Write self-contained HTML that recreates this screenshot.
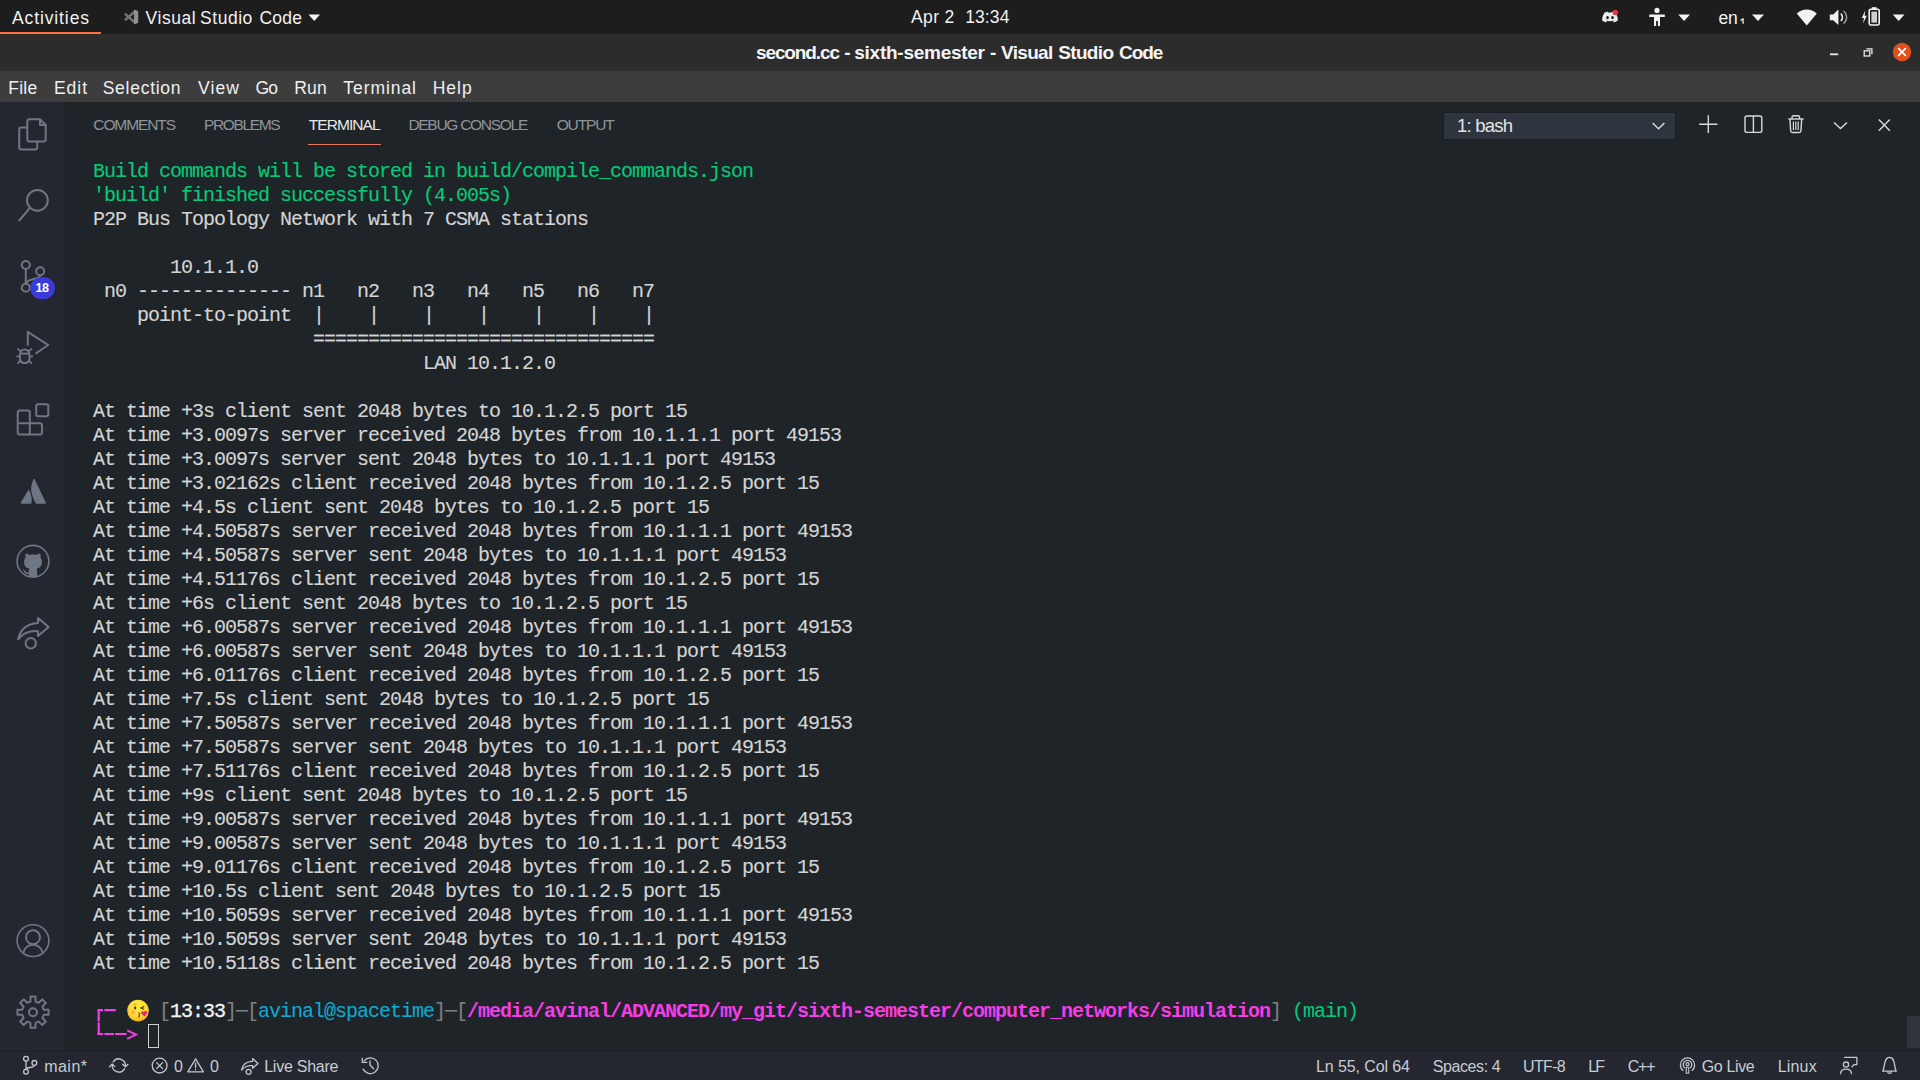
<!DOCTYPE html>
<html><head><meta charset="utf-8"><title>second.cc - sixth-semester - Visual Studio Code</title>
<style>
*{margin:0;padding:0;box-sizing:border-box}
html,body{width:1920px;height:1080px;overflow:hidden;background:#1f2428;font-family:'Liberation Sans', sans-serif}
.abs{position:absolute}
.t{position:absolute;white-space:pre;font-family:'Liberation Sans', sans-serif}
#top{left:0;top:0;width:1920px;height:34px;background:#1d1d1d}
#topline{left:0;top:34px;width:1920px;height:1px;background:#3a3a3a}
#actline{left:0;top:32px;width:101px;height:2px;background:#ff6e3c}
#title{left:0;top:34px;width:1920px;height:37px;background:#2c2c2c}
#menu{left:0;top:71px;width:1920px;height:31px;background:#3d3d3d}
#act{left:0;top:102px;width:65px;height:949px;background:#24272f}
#actb{left:65px;top:102px;width:1px;height:949px;background:#1b1e22}
#status{left:0;top:1051px;width:1920px;height:29px;background:#24272f;border-top:1px solid #1b1e22}
#tabul{left:308px;top:144px;width:73px;height:1px;background:#ee7660}
#dd{left:1444px;top:113px;width:231px;height:26px;background:#2f353f;box-shadow:0 0 0 1px #1b1f23}
#sb{left:1907px;top:1016px;width:13px;height:32px;background:#2f333c}
#cur{left:148px;top:1024px;width:11px;height:24px;border:1px solid #d0d0d0}
.ln{position:absolute;left:93px;height:24px;line-height:24px;white-space:pre;font-family:'Liberation Mono', monospace;
 font-size:20px;letter-spacing:-1.002px;color:#d4d4d4;-webkit-text-stroke:0.12px currentColor}
.ln span{display:inline-block;height:24px;vertical-align:top}
.g{color:#08c878}.w{color:#d4d4d4}.c{color:#11a8cd}.d{color:#7f7f7f}
.b{color:#f4f4f4;-webkit-text-stroke:0.3px currentColor}
.m{color:#f53ce6;font-weight:700;-webkit-text-stroke:0}
svg{position:absolute;overflow:visible}
</style></head><body>
<div id="top" class="abs"></div><div id="topline" class="abs"></div><div id="actline" class="abs"></div>
<div id="title" class="abs"></div><div id="menu" class="abs"></div>
<div id="act" class="abs"></div><div id="actb" class="abs"></div>
<div id="status" class="abs"></div>
<div id="tabul" class="abs"></div><div id="dd" class="abs"></div><div id="sb" class="abs"></div>
<div class="ln" style="top:160px"><span class="g">Build commands will be stored in build/compile_commands.json</span></div>
<div class="ln" style="top:184px"><span class="g">&#x27;build&#x27; finished successfully (4.005s)</span></div>
<div class="ln" style="top:208px"><span class="w">P2P Bus Topology Network with 7 CSMA stations</span></div>
<div class="ln" style="top:256px"><span class="w">       10.1.1.0</span></div>
<div class="ln" style="top:280px"><span class="w"> n0 -------------- n1   n2   n3   n4   n5   n6   n7</span></div>
<div class="ln" style="top:304px"><span class="w">    point-to-point  |    |    |    |    |    |    |</span></div>
<div class="ln" style="top:328px"><span class="w">                    ===============================</span></div>
<div class="ln" style="top:352px"><span class="w">                              LAN 10.1.2.0</span></div>
<div class="ln" style="top:400px"><span class="w">At time +3s client sent 2048 bytes to 10.1.2.5 port 15</span></div>
<div class="ln" style="top:424px"><span class="w">At time +3.0097s server received 2048 bytes from 10.1.1.1 port 49153</span></div>
<div class="ln" style="top:448px"><span class="w">At time +3.0097s server sent 2048 bytes to 10.1.1.1 port 49153</span></div>
<div class="ln" style="top:472px"><span class="w">At time +3.02162s client received 2048 bytes from 10.1.2.5 port 15</span></div>
<div class="ln" style="top:496px"><span class="w">At time +4.5s client sent 2048 bytes to 10.1.2.5 port 15</span></div>
<div class="ln" style="top:520px"><span class="w">At time +4.50587s server received 2048 bytes from 10.1.1.1 port 49153</span></div>
<div class="ln" style="top:544px"><span class="w">At time +4.50587s server sent 2048 bytes to 10.1.1.1 port 49153</span></div>
<div class="ln" style="top:568px"><span class="w">At time +4.51176s client received 2048 bytes from 10.1.2.5 port 15</span></div>
<div class="ln" style="top:592px"><span class="w">At time +6s client sent 2048 bytes to 10.1.2.5 port 15</span></div>
<div class="ln" style="top:616px"><span class="w">At time +6.00587s server received 2048 bytes from 10.1.1.1 port 49153</span></div>
<div class="ln" style="top:640px"><span class="w">At time +6.00587s server sent 2048 bytes to 10.1.1.1 port 49153</span></div>
<div class="ln" style="top:664px"><span class="w">At time +6.01176s client received 2048 bytes from 10.1.2.5 port 15</span></div>
<div class="ln" style="top:688px"><span class="w">At time +7.5s client sent 2048 bytes to 10.1.2.5 port 15</span></div>
<div class="ln" style="top:712px"><span class="w">At time +7.50587s server received 2048 bytes from 10.1.1.1 port 49153</span></div>
<div class="ln" style="top:736px"><span class="w">At time +7.50587s server sent 2048 bytes to 10.1.1.1 port 49153</span></div>
<div class="ln" style="top:760px"><span class="w">At time +7.51176s client received 2048 bytes from 10.1.2.5 port 15</span></div>
<div class="ln" style="top:784px"><span class="w">At time +9s client sent 2048 bytes to 10.1.2.5 port 15</span></div>
<div class="ln" style="top:808px"><span class="w">At time +9.00587s server received 2048 bytes from 10.1.1.1 port 49153</span></div>
<div class="ln" style="top:832px"><span class="w">At time +9.00587s server sent 2048 bytes to 10.1.1.1 port 49153</span></div>
<div class="ln" style="top:856px"><span class="w">At time +9.01176s client received 2048 bytes from 10.1.2.5 port 15</span></div>
<div class="ln" style="top:880px"><span class="w">At time +10.5s client sent 2048 bytes to 10.1.2.5 port 15</span></div>
<div class="ln" style="top:904px"><span class="w">At time +10.5059s server received 2048 bytes from 10.1.1.1 port 49153</span></div>
<div class="ln" style="top:928px"><span class="w">At time +10.5059s server sent 2048 bytes to 10.1.1.1 port 49153</span></div>
<div class="ln" style="top:952px"><span class="w">At time +10.5118s client received 2048 bytes from 10.1.2.5 port 15</span></div>
<div class="ln" style="top:1000px"><span class="w">      </span><span class="d">[</span><span class="b">13:33</span><span class="d">]</span><span class="d">─</span><span class="d">[</span><span class="c">avinal@spacetime</span><span class="d">]</span><span class="d">─</span><span class="d">[</span><span class="m">/media/avinal/ADVANCED/my_git/sixth-semester/computer_networks/simulation</span><span class="d">]</span><span class="w"> </span><span class="g">(main)</span></div>
<div id="cur" class="abs"></div>
<!-- ===== top bar icons ===== -->
<svg style="left:0;top:0" width="1920" height="72" viewBox="0 0 1920 72">
  <!-- vscode logo -->
  <g fill="none" stroke="#747474" stroke-width="2.5" stroke-linejoin="round" stroke-linecap="butt">
    <path d="M135.4 10.9 L125 20.2"/>
    <path d="M135.4 23.1 L125 13.8"/>
  </g>
  <path d="M133.9 10.3 L135.2 9.8 L138.2 11.3 L138.2 22.7 L135.2 24.2 L133.9 23.7 Z" fill="#8f8f8f"/>
  <!-- app menu triangle -->
  <path d="M308.5 14.6 H320 L314.25 21 Z" fill="#f2f2f2"/>
  <!-- discord -->
  <path d="M1604.6 12.6 C1606.2 11.9 1607.4 11.7 1608 11.7 L1608.5 12.7 C1609.5 12.55 1610.5 12.55 1611.5 12.7 L1612 11.7 C1612.6 11.7 1613.8 11.9 1615.4 12.6 C1617.3 15.4 1618 18.6 1617.8 20.6 C1616.4 21.7 1614.9 22.2 1613.9 22.4 L1613 21 C1613.6 20.8 1614.1 20.5 1614.5 20.2 C1611.6 21.5 1608.4 21.5 1605.5 20.2 C1605.9 20.5 1606.4 20.8 1607 21 L1606.1 22.4 C1605.1 22.2 1603.6 21.7 1602.2 20.6 C1602 18.6 1602.7 15.4 1604.6 12.6 Z" fill="#ededed"/>
  <ellipse cx="1607.5" cy="17.6" rx="1.35" ry="1.6" fill="#1d1d1d"/>
  <ellipse cx="1612.5" cy="17.6" rx="1.35" ry="1.6" fill="#1d1d1d"/>
  <circle cx="1615.3" cy="12.4" r="2.7" fill="#e8334a"/>
  <!-- accessibility -->
  <circle cx="1657" cy="10.4" r="2.6" fill="#f2f2f2"/>
  <path d="M1649.3 14.6 H1664.8 V17 H1660 V26 H1657.9 V21 H1656.1 V26 H1654 V17 H1649.3 Z" fill="#f2f2f2"/>
  <path d="M1678.2 14.6 H1690 L1684.1 21 Z" fill="#f2f2f2"/>
  <path d="M1752 14.6 H1764 L1758 21 Z" fill="#f2f2f2"/>
  <!-- en subscript 1 -->
  <path d="M1740.2 19.9 L1742.6 18.2 H1743.7 V23.7 H1742.4 V19.9 L1740.8 20.9 Z" fill="#f2f2f2"/>
  <!-- wifi -->
  <path d="M1806.8 25.6 L1796.8 13.6 C1802.6 8.2 1811 8.2 1816.8 13.6 Z" fill="#f2f2f2"/>
  <!-- volume -->
  <path d="M1829.8 14.4 H1833.2 L1838.4 9.6 V25 L1833.2 20.2 H1829.8 Z" fill="#f2f2f2"/>
  <path d="M1840.8 13.6 C1843 15.6 1843 19 1840.8 21" fill="none" stroke="#f2f2f2" stroke-width="1.5"/>
  <path d="M1843.6 11 C1847.6 14.4 1847.6 20.2 1843.6 23.6" fill="none" stroke="#9a9a9a" stroke-width="1.4"/>
  <!-- battery -->
  <path d="M1865.2 10.6 L1861.8 18 H1864 L1863 23.6 L1866.8 15.8 H1864.6 Z" fill="#f2f2f2"/>
  <rect x="1869.2" y="9.2" width="10" height="15.8" rx="1.6" fill="none" stroke="#f2f2f2" stroke-width="1.6"/>
  <rect x="1871.8" y="7.2" width="4.8" height="2" fill="#f2f2f2"/>
  <rect x="1871.4" y="11.6" width="5.6" height="11" fill="#cfcfcf"/>
  <path d="M1892.8 14.6 H1904.5 L1898.65 21 Z" fill="#f2f2f2"/>
  <!-- window controls -->
  <rect x="1830" y="53.4" width="8.2" height="1.8" fill="#e6e6e6"/>
  <rect x="1864.2" y="50.8" width="5.6" height="5.2" fill="none" stroke="#e6e6e6" stroke-width="1.3"/>
  <path d="M1866.4 48.9 H1871.9 V54.2" fill="none" stroke="#e6e6e6" stroke-width="1.3"/>
  <circle cx="1902" cy="52" r="9.2" fill="#e2501e"/>
  <path d="M1898.2 48.2 L1905.8 55.8 M1905.8 48.2 L1898.2 55.8" stroke="#ffffff" stroke-width="1.7" fill="none"/>
</svg>
<!-- ===== activity bar icons ===== -->
<svg style="left:0;top:102px" width="66" height="949" viewBox="0 102 66 949">
 <g fill="none" stroke="#6f7683" stroke-width="2" stroke-linejoin="round" stroke-linecap="butt">
  <!-- explorer -->
  <path d="M29.3 119.3 H40 L45.7 125 V139.4 Q45.7 141.4 43.7 141.4 H29.3 Q27.3 141.4 27.3 139.4 V121.3 Q27.3 119.3 29.3 119.3 Z"/>
  <path d="M40 119.3 V125 H45.7"/>
  <path d="M27.3 127.4 H21.2 Q19.2 127.4 19.2 129.4 V147.6 Q19.2 149.6 21.2 149.6 H35.2 Q37.2 149.6 37.2 147.6 V141.4"/>
  <!-- search -->
  <circle cx="37.4" cy="200.3" r="10.4"/>
  <path d="M30.2 207.6 L18.8 221"/>
  <!-- source control -->
  <circle cx="25.8" cy="265" r="4"/>
  <circle cx="40.2" cy="271.3" r="4"/>
  <circle cx="25.8" cy="287.8" r="4"/>
  <path d="M25.8 269 V283.8"/>
  <path d="M40.2 275.3 C40.2 280 27 278 25.8 283.8"/>
  <!-- debug -->
  <path d="M27.8 345.6 V331.8 L48.2 345 L35.4 353.8"/>
  <path d="M19.9 355.4 Q19.9 349.4 24.7 349.4 Q29.5 349.4 29.5 355.4 V358 Q29.5 363 24.7 363 Q19.9 363 19.9 358 Z"/>
  <path d="M19.9 353.6 H29.5"/>
  <path d="M19.9 356.4 H16.4 M29.5 356.4 H33 M20.4 351 L17.4 348.6 M29 351 L32 348.6 M20.6 360.6 L17.4 363.6 M28.8 360.6 L32 363.6" stroke-width="1.7"/>
  <!-- extensions -->
  <rect x="36.2" y="404.3" width="12.1" height="11.9" rx="2"/>
  <path d="M19.7 410.4 H27.8 Q29.8 410.4 29.8 412.4 V423.2 H40 Q42 423.2 42 425.2 V432.6 Q42 434.6 40 434.6 H19.7 Q17.7 434.6 17.7 432.6 V412.4 Q17.7 410.4 19.7 410.4 Z"/>
  <path d="M17.7 423.2 H29.8 V434.6"/>
  <!-- github circle -->
  <circle cx="33" cy="561.3" r="15.9" stroke-width="1.6"/>
  <!-- live share -->
  <path d="M38 622.9 V618 L48.6 627 L38 636 V631.2 C29 630.6 22.6 633.4 18.2 639.4 C19.8 630 27 623.4 38 622.9 Z"/>
  <circle cx="30.8" cy="643.3" r="5.2"/>
  <!-- account -->
  <circle cx="33" cy="940.6" r="15.9" stroke-width="1.6"/>
  <circle cx="33" cy="937.2" r="7"/>
  <path d="M23.4 953 C25.4 942 40.6 942 42.6 953" stroke-width="1.8"/>
  <!-- gear -->
  <path d="M30.44 1001.50 L30.48 996.60 L35.52 996.60 L35.56 1001.50 L38.75 1002.82 L42.25 999.39 L45.81 1002.95 L42.38 1006.45 L43.70 1009.64 L48.60 1009.68 L48.60 1014.72 L43.70 1014.76 L42.38 1017.95 L45.81 1021.45 L42.25 1025.01 L38.75 1021.58 L35.56 1022.90 L35.52 1027.80 L30.48 1027.80 L30.44 1022.90 L27.25 1021.58 L23.75 1025.01 L20.19 1021.45 L23.62 1017.95 L22.30 1014.76 L17.40 1014.72 L17.40 1009.68 L22.30 1009.64 L23.62 1006.45 L20.19 1002.95 L23.75 999.39 L27.25 1002.82 Z"/>
  <circle cx="33" cy="1012.2" r="4"/>
 </g>
 <!-- atlassian -->
 <g fill="#6f7683">
  <path d="M33.6 478.9 C34 478.6 34.4 478.9 34.6 479.3 L45.8 502.6 C46.1 503.3 45.7 503.8 45 503.8 H36.6 C36.1 503.8 35.8 503.6 35.6 503.1 C32.4 496.4 28.6 489 33.6 478.9 Z"/>
  <path d="M28 490.4 C28.4 489.9 28.9 490 29.2 490.5 C31.4 494.2 32.2 498.6 31.5 503.1 C31.4 503.6 31.1 503.8 30.6 503.8 H21.6 C20.9 503.8 20.5 503.3 20.8 502.6 Z"/>
  <!-- github cat -->
  <path d="M25.9 553.4 C27.3 553.5 28.6 554.2 29.6 555 C31.8 554.4 34.2 554.4 36.4 555 C37.4 554.2 38.7 553.5 40.1 553.4 C40.8 555 40.8 556.6 40.4 557.6 C41.4 558.8 41.9 560.3 41.9 561.9 C41.9 566.4 39.6 568 36.7 568.5 C37.1 569.1 37.2 569.9 37.2 570.9 V577 C35.8 577.5 30.2 577.5 28.8 577 V574 C26 574.6 25 573.4 24.4 572.2 C24 571.2 23.4 570.4 22.6 570 C21.9 569.5 22.6 569.3 23.2 569.4 C24.2 569.6 24.9 570.4 25.4 571.2 C26.4 572.8 27.8 572.6 28.8 572.2 V570.9 C28.8 569.9 28.9 569.1 29.3 568.5 C26.4 568 24.1 566.4 24.1 561.9 C24.1 560.3 24.6 558.8 25.6 557.6 C25.2 556.6 25.2 555 25.9 553.4 Z"/>
 </g>
 <!-- scm badge -->
 <rect x="30.2" y="277.2" width="24.7" height="21.7" rx="10.85" fill="#3b3bdb"/>
</svg>
<!-- ===== panel toolbar icons ===== -->
<svg style="left:1640px;top:106px" width="260" height="40" viewBox="1640 106 260 40">
 <g fill="none" stroke="#d9d9d9" stroke-width="1.4" stroke-linecap="butt" stroke-linejoin="miter">
  <path d="M1652.6 123 L1658.5 128.8 L1664.4 123"/>
  <path d="M1708.3 115.2 V133.1 M1699.2 124.2 H1717.5"/>
  <rect x="1745" y="116" width="16.8" height="16.4" rx="2"/>
  <path d="M1753.4 116 V132.4"/>
  <path d="M1788.3 119 H1803.6"/>
  <path d="M1792 119 V117.4 Q1792 115.8 1793.6 115.8 H1798 Q1799.6 115.8 1799.6 117.4 V119"/>
  <path d="M1789.9 119 L1790.7 131 Q1790.8 132.5 1792.3 132.5 H1799.3 Q1800.8 132.5 1800.9 131 L1801.7 119"/>
  <path d="M1793.4 121.6 V130 M1795.8 121.6 V130 M1798.2 121.6 V130" stroke-width="1.2"/>
  <path d="M1834 122.4 L1840.5 128.6 L1847 122.4"/>
  <path d="M1878.8 119.4 L1889.8 130.8 M1889.8 119.4 L1878.8 130.8"/>
 </g>
</svg>
<!-- ===== status bar icons ===== -->
<svg style="left:0;top:1052px" width="1920" height="28" viewBox="0 1052 1920 28">
 <g fill="none" stroke="#c3c7cd" stroke-width="1.3" stroke-linecap="round" stroke-linejoin="round">
  <!-- branch -->
  <circle cx="26" cy="1058.8" r="2.4"/><circle cx="26" cy="1071.7" r="2.4"/><circle cx="34.4" cy="1062.9" r="2.4"/>
  <path d="M26 1061.2 V1069.3 M34.4 1065.3 C34.4 1068.4 26.4 1066.6 26 1069.3"/>
  <!-- sync -->
  <path d="M113.2 1061.9 A6.6 6.6 0 0 1 125.3 1066.2 M124.5 1068.8 A6.6 6.6 0 0 1 112.3 1064.6"/>
  <path d="M122.7 1064.2 L125.4 1066.9 L128 1064.2 M109.5 1066.7 L112.2 1064 L114.8 1066.6"/>
  <!-- error -->
  <circle cx="159.6" cy="1065.6" r="7.4"/>
  <path d="M156.6 1062.6 L162.6 1068.6 M162.6 1062.6 L156.6 1068.6"/>
  <!-- warning -->
  <path d="M195.6 1058.8 L203.4 1071.8 H187.8 Z"/>
  <path d="M195.6 1063.2 V1067.6 M195.6 1069.4 V1069.8"/>
  <!-- live share -->
  <path d="M252.6 1061.4 V1058.6 L258 1063.4 L252.6 1068.2 V1065.6 C247.6 1065.2 244.2 1066.8 241.6 1070 C242.4 1064.8 246.6 1061.6 252.6 1061.4 Z"/>
  <circle cx="248.6" cy="1071.8" r="2.5"/>
  <!-- history -->
  <path d="M364.2 1060.8 A7.9 7.9 0 1 1 363.2 1069.1"/>
  <path d="M362.3 1058.2 V1062.4 H366.8"/>
  <path d="M370 1060.8 V1065 L373.6 1068.8"/>
  <!-- go live (broadcast) -->
  <circle cx="1687.5" cy="1064.2" r="1.5"/>
  <path d="M1686.3 1067.2 H1688.7 V1073.2 H1686.3 Z" stroke-width="1.1"/>
  <path d="M1684.6 1067.8 A4.3 4.3 0 1 1 1690.4 1067.8"/>
  <path d="M1682.9 1070.4 A7.1 7.1 0 1 1 1692.1 1070.4"/>
  <!-- feedback -->
  <circle cx="1846" cy="1064.6" r="2.6"/>
  <path d="M1840.5 1073.6 C1840.9 1067.6 1851.1 1067.6 1851.5 1073.6"/>
  <path d="M1844.6 1057.4 H1856.9 V1064.6 H1854 L1852 1066.8"/>
  <!-- bell -->
  <path d="M1882.6 1071.2 C1885 1069.4 1883.2 1057.4 1889.5 1057.4 C1895.8 1057.4 1894 1069.4 1896.4 1071.2 Z"/>
  <path d="M1887.6 1071.6 C1887.8 1074 1891.2 1074 1891.4 1071.6"/>
 </g>
</svg>
<!-- ===== prompt decorations ===== -->
<svg style="left:90px;top:996px" width="80" height="56" viewBox="90 996 80 56">
 <g fill="none" stroke="#f53ce6" stroke-width="2.2">
  <path d="M98.7 1009.2 V1021.6 M98.7 1022.6 V1035"/>
  <path d="M97.6 1010.2 H103 M104.4 1010.2 H115.8"/>
  <path d="M97.6 1034 H103.2 M104.4 1034 H114 M115.2 1034 H126.6"/>
  <path d="M127.2 1030.4 L136 1034.6 L127.2 1038.8" stroke-width="2"/>
 </g>
 <!-- emoji -->
 <defs><radialGradient id="eg" cx="50%" cy="35%" r="70%"><stop offset="0" stop-color="#fff13b"/><stop offset="0.6" stop-color="#fdd835"/><stop offset="1" stop-color="#f5a623"/></radialGradient></defs>
 <circle cx="138" cy="1010.6" r="10.8" fill="url(#eg)"/>
 <circle cx="133" cy="1012" r="1.9" fill="#f59a6a" opacity=".8"/>
 <ellipse cx="135.2" cy="1008" rx="1.1" ry="1.4" fill="#3a2a14"/>
 <path d="M144.2 1006.4 L140.8 1008 L144.2 1009.6" fill="none" stroke="#3a2a14" stroke-width="1.1"/><path d="M133.4 1005 Q135 1003.8 136.6 1004.6" fill="none" stroke="#e0901e" stroke-width=".9"/>
 <path d="M138.4 1012.4 C140.2 1013 140.2 1014.4 138.6 1014.8 C140.2 1015.2 140.2 1016.8 138.2 1017.2" fill="none" stroke="#3a2a14" stroke-width="1"/>
 <path d="M144.4 1016.6 L141.4 1013.6 C140.2 1012 142.4 1010.4 143.8 1012 C144.6 1010.2 147.8 1010.8 147.2 1013.2 Z" fill="#e91e78"/>
</svg>

<div class="t" style="left:12.0px;top:5.0px;font-size:17.5px;line-height:26px;font-weight:400;color:#f2f2f2;letter-spacing:0.884px">Activities</div>
<div class="t" style="left:145.6px;top:5.0px;font-size:17.5px;line-height:26px;font-weight:400;color:#f2f2f2;letter-spacing:0.548px">Visual</div>
<div class="t" style="left:200.1px;top:5.0px;font-size:17.5px;line-height:26px;font-weight:400;color:#f2f2f2;letter-spacing:0.515px">Studio</div>
<div class="t" style="left:259.4px;top:5.0px;font-size:17.5px;line-height:26px;font-weight:400;color:#f2f2f2;letter-spacing:0.252px">Code</div>
<div class="t" style="left:911.0px;top:4.0px;font-size:17.5px;line-height:26px;font-weight:400;color:#f2f2f2;letter-spacing:0.368px">Apr 2</div>
<div class="t" style="left:965.2px;top:4.0px;font-size:17.5px;line-height:26px;font-weight:400;color:#f2f2f2;letter-spacing:0.101px">13:34</div>
<div class="t" style="left:1718.4px;top:4.7px;font-size:17.5px;line-height:26px;font-weight:400;color:#f2f2f2;letter-spacing:-0.069px">en</div>
<div class="t" style="left:756.0px;top:39.0px;font-size:19px;line-height:28px;font-weight:700;color:#f4f4f4;letter-spacing:-1.117px">second.cc</div>
<div class="t" style="left:844.3px;top:39.0px;font-size:19px;line-height:28px;font-weight:700;color:#f4f4f4;letter-spacing:0.000px">-</div>
<div class="t" style="left:854.3px;top:39.0px;font-size:19px;line-height:28px;font-weight:700;color:#f4f4f4;letter-spacing:-0.263px">sixth-semester</div>
<div class="t" style="left:990.0px;top:39.0px;font-size:19px;line-height:28px;font-weight:700;color:#f4f4f4;letter-spacing:0.000px">-</div>
<div class="t" style="left:1001.0px;top:39.0px;font-size:19px;line-height:28px;font-weight:700;color:#f4f4f4;letter-spacing:-0.668px">Visual</div>
<div class="t" style="left:1058.3px;top:39.0px;font-size:19px;line-height:28px;font-weight:700;color:#f4f4f4;letter-spacing:-0.682px">Studio</div>
<div class="t" style="left:1119.0px;top:39.0px;font-size:19px;line-height:28px;font-weight:700;color:#f4f4f4;letter-spacing:-1.067px">Code</div>
<div class="t" style="left:8.3px;top:75.0px;font-size:17.5px;line-height:26px;font-weight:400;color:#f0f0f0;letter-spacing:0.232px">File</div>
<div class="t" style="left:54.0px;top:75.0px;font-size:17.5px;line-height:26px;font-weight:400;color:#f0f0f0;letter-spacing:0.948px">Edit</div>
<div class="t" style="left:102.7px;top:75.0px;font-size:17.5px;line-height:26px;font-weight:400;color:#f0f0f0;letter-spacing:0.737px">Selection</div>
<div class="t" style="left:198.0px;top:75.0px;font-size:17.5px;line-height:26px;font-weight:400;color:#f0f0f0;letter-spacing:1.125px">View</div>
<div class="t" style="left:255.4px;top:75.0px;font-size:17.5px;line-height:26px;font-weight:400;color:#f0f0f0;letter-spacing:-0.759px">Go</div>
<div class="t" style="left:294.3px;top:75.0px;font-size:17.5px;line-height:26px;font-weight:400;color:#f0f0f0;letter-spacing:0.145px">Run</div>
<div class="t" style="left:343.3px;top:75.0px;font-size:17.5px;line-height:26px;font-weight:400;color:#f0f0f0;letter-spacing:0.937px">Terminal</div>
<div class="t" style="left:432.7px;top:75.0px;font-size:17.5px;line-height:26px;font-weight:400;color:#f0f0f0;letter-spacing:1.000px">Help</div>
<div class="t" style="left:93.3px;top:113.0px;font-size:15.5px;line-height:23px;font-weight:400;color:#8f949c;letter-spacing:-1.103px">COMMENTS</div>
<div class="t" style="left:203.9px;top:113.0px;font-size:15.5px;line-height:23px;font-weight:400;color:#8f949c;letter-spacing:-1.349px">PROBLEMS</div>
<div class="t" style="left:308.7px;top:113.0px;font-size:15.5px;line-height:23px;font-weight:400;color:#e8e8e8;letter-spacing:-0.925px">TERMINAL</div>
<div class="t" style="left:408.4px;top:113.0px;font-size:15.5px;line-height:23px;font-weight:400;color:#8f949c;letter-spacing:-1.278px">DEBUG CONSOLE</div>
<div class="t" style="left:556.7px;top:113.0px;font-size:15.5px;line-height:23px;font-weight:400;color:#8f949c;letter-spacing:-1.144px">OUTPUT</div>
<div class="t" style="left:1456.9px;top:111.6px;font-size:18.5px;line-height:28px;font-weight:400;color:#e4e4e4;letter-spacing:-0.765px">1: bash</div>
<div class="t" style="left:44.2px;top:1054.5px;font-size:16px;line-height:24px;font-weight:400;color:#c8ccd2;letter-spacing:0.473px">main*</div>
<div class="t" style="left:174.0px;top:1054.5px;font-size:16px;line-height:24px;font-weight:400;color:#c8ccd2;letter-spacing:0.000px">0</div>
<div class="t" style="left:210.0px;top:1054.5px;font-size:16px;line-height:24px;font-weight:400;color:#c8ccd2;letter-spacing:0.000px">0</div>
<div class="t" style="left:264.2px;top:1054.5px;font-size:16px;line-height:24px;font-weight:400;color:#c8ccd2;letter-spacing:-0.244px">Live Share</div>
<div class="t" style="left:1316.0px;top:1054.5px;font-size:16px;line-height:24px;font-weight:400;color:#c8ccd2;letter-spacing:-0.099px">Ln 55, Col 64</div>
<div class="t" style="left:1432.7px;top:1054.5px;font-size:16px;line-height:24px;font-weight:400;color:#c8ccd2;letter-spacing:-0.395px">Spaces: 4</div>
<div class="t" style="left:1523.0px;top:1054.5px;font-size:16px;line-height:24px;font-weight:400;color:#c8ccd2;letter-spacing:-0.657px">UTF-8</div>
<div class="t" style="left:1588.3px;top:1054.5px;font-size:16px;line-height:24px;font-weight:400;color:#c8ccd2;letter-spacing:-1.972px">LF</div>
<div class="t" style="left:1627.7px;top:1054.5px;font-size:16px;line-height:24px;font-weight:400;color:#c8ccd2;letter-spacing:-1.125px">C++</div>
<div class="t" style="left:1701.7px;top:1054.5px;font-size:16px;line-height:24px;font-weight:400;color:#c8ccd2;letter-spacing:-0.357px">Go Live</div>
<div class="t" style="left:1777.7px;top:1054.5px;font-size:16px;line-height:24px;font-weight:400;color:#c8ccd2;letter-spacing:0.188px">Linux</div>
<div class="t" style="left:35.5px;top:279.0px;font-size:12.5px;line-height:19px;font-weight:700;color:#ffffff;letter-spacing:-0.406px">18</div>
</body></html>
